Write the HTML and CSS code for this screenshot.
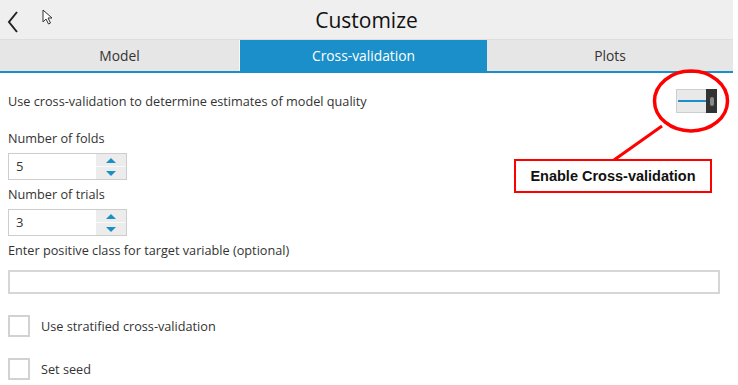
FILE: index.html
```html
<!DOCTYPE html>
<html>
<head>
<meta charset="utf-8">
<link rel="stylesheet" href="styles.css">
</head>
<body>
<div class="app">
  <header class="topbar">
    <svg class="back" width="12" height="22" viewBox="0 0 12 22"><path d="M10 1 L2 11 L10 21" fill="none" stroke="#222" stroke-width="2"/></svg>
    <svg class="cursor" width="12" height="16" viewBox="0 0 12 16"><path d="M1 1 L1 13 L4 10 L6.5 15 L8.5 14 L6 9 L10 9 Z" fill="#fff" stroke="#333" stroke-width="1"/></svg>
    <h1 class="title">Customize</h1>
  </header>
  <nav class="tabs">
    <div class="tab">Model</div>
    <div class="tab active">Cross-validation</div>
    <div class="tab">Plots</div>
  </nav>
  <main class="content">
    <div class="row-toggle">
      <span class="label">Use cross-validation to determine estimates of model quality</span>
      <div class="toggle"><div class="track"><div class="line"></div></div><div class="thumb"><span></span></div></div>
    </div>
    <div class="label field-label folds">Number of folds</div>
    <div class="spin"><span class="val">5</span><div class="btns"><span class="up"></span><span class="down"></span></div></div>
    <div class="label field-label trials">Number of trials</div>
    <div class="spin"><span class="val">3</span><div class="btns"><span class="up"></span><span class="down"></span></div></div>
    <div class="label field-label positive">Enter positive class for target variable (optional)</div>
    <div class="textbox"></div>
    <div class="check"><span class="box"></span><span class="label">Use stratified cross-validation</span></div>
    <div class="check"><span class="box"></span><span class="label">Set seed</span></div>
  </main>
  <svg class="annot" width="738" height="385" viewBox="0 0 738 385">
    <ellipse cx="691" cy="101" rx="36.5" ry="30" fill="none" stroke="#ff0000" stroke-width="3.5"/>
    <line x1="662" y1="126" x2="614" y2="160" stroke="#ff0000" stroke-width="3"/>
  </svg>
  <div class="callout">Enable Cross-validation</div>
</div>
</body>
</html>
```
FILE: styles.css
```css
html, body { margin: 0; padding: 0; background: #fff; }
body { width: 738px; height: 385px; overflow: hidden; font-family: "Open Sans", "Noto Sans", sans-serif; color: #333; }
.app { position: relative; width: 733px; height: 385px; }
.topbar { height: 39px; background: #efefef; border-bottom: 1px solid #dedede; display: flex; align-items: center; justify-content: center; position: relative; }
.back { position: absolute; left: 7px; top: 11px; }
.cursor { position: absolute; left: 42px; top: 9px; }
.title { margin: 0; font-weight: 400; font-size: 21px; color: #111; }
.tabs { display: flex; height: 31px; background: #e6e6e6; border-bottom: 2px solid #1a8fc9; }
.tab { flex: 0 0 auto; display: flex; align-items: center; justify-content: center; font-size: 13.8px; color: #333; border-right: 1px solid #fafafa; box-sizing: border-box; }
.tab:nth-child(1) { width: 240px; }
.tab:nth-child(2) { width: 247px; }
.tab:nth-child(3) { flex: 1; border-right: none; }
.tab.active { background: #1a8fc9; color: #fff; border-right: none; }
.content { padding: 0 0 0 8px; }
.label { font-size: 12.7px; color: #333; }
.row-toggle { display: flex; align-items: center; justify-content: space-between; height: 26px; margin-top: 15px; padding-right: 16px; }
.toggle { display: flex; height: 24px; }
.track { width: 29px; height: 22px; border: 1px solid #cfcfcf; border-right: none; background: #e9e9e9; position: relative; }
.track .line { position: absolute; left: 1px; right: 0; top: 10px; height: 2px; background: #1a8fc9; }
.thumb { width: 11px; height: 24px; background: #333; display: flex; align-items: center; justify-content: center; }
.thumb span { width: 4px; height: 9px; border-radius: 2px; background: #8a8a8a; }
.field-label { height: 17px; line-height: 17px; }
.folds { margin-top: 16px; }
.trials { margin-top: 6px; }
.positive { margin-top: 6px; }
.spin { margin-top: 6px; width: 119px; height: 27px; border: 1px solid #cdcdcd; box-sizing: border-box; display: flex; }
.spin .val { flex: 1; font-size: 13px; line-height: 25px; padding-left: 7px; }
.btns { width: 30px; background: #ececec; display: flex; flex-direction: column; }
.btns span { flex: 1; display: flex; align-items: center; justify-content: center; }
.btns .up { border-bottom: 1px solid #fafafa; }
.btns .up::after { content: ""; border-left: 5px solid transparent; border-right: 5px solid transparent; border-bottom: 5px solid #1a8fc9; }
.btns .down::after { content: ""; border-left: 5px solid transparent; border-right: 5px solid transparent; border-top: 5px solid #1a8fc9; }
.textbox { margin-top: 11px; width: 712px; height: 24px; border: 2px solid #d6d6d6; box-sizing: border-box; }
.check { display: flex; align-items: center; margin-top: 21px; height: 22px; }
.check .box { width: 22px; height: 22px; border: 2px solid #d2d2d2; box-sizing: border-box; margin-right: 11px; }
.annot { position: absolute; left: 0; top: 0; pointer-events: none; }
.callout { position: absolute; left: 514px; top: 159px; width: 198px; height: 34px; box-sizing: border-box; border: 2px solid #ff0000; background: #fff; display: flex; align-items: center; justify-content: center; font-family: "Liberation Sans", Arial, sans-serif; font-weight: 700; font-size: 14.5px; color: #111; }
```
